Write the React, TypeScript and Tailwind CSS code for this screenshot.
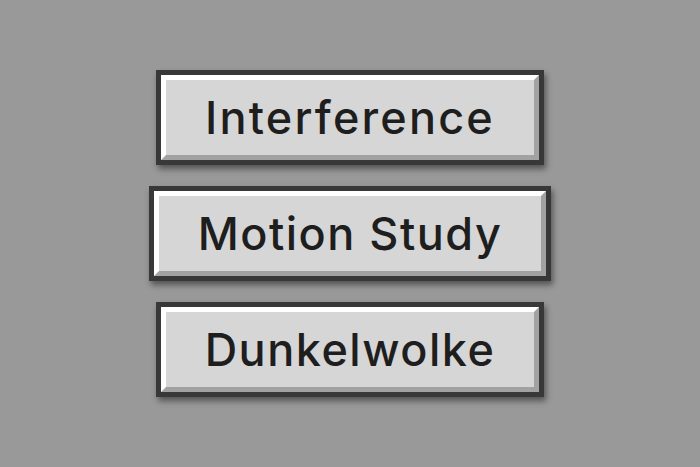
import React from "react";

const items = [
  { label: "Interference", tracking: "tracking-[2.2px]" },
  { label: "Motion Study", tracking: "tracking-[1.5px]" },
  { label: "Dunkelwolke", tracking: "tracking-[1.5px]" },
];

function RetroButton({ label, tracking }: { label: string; tracking: string }) {
  return (
    <button className="border-[5px] border-[#383838] bg-[#383838] shadow-[2px_4px_6px_rgba(0,0,0,0.45)]">
      <div className="border-[5px] border-t-white border-l-white border-b-[#a2a2a2] border-r-[#a2a2a2] bg-[#d6d6d6] h-[85px] px-[39px] flex items-center justify-center">
        <span className={`font-['Inter',sans-serif] font-medium text-[45px] leading-none ${tracking} text-[#1e1e1e]`}>
          {label}
        </span>
      </div>
    </button>
  );
}

export default function App() {
  return (
    <main className="h-[467px] w-full bg-[#999999] flex flex-col items-center justify-center gap-[21px]">
      {items.map((item) => (
        <RetroButton key={item.label} label={item.label} tracking={item.tracking} />
      ))}
    </main>
  );
}
